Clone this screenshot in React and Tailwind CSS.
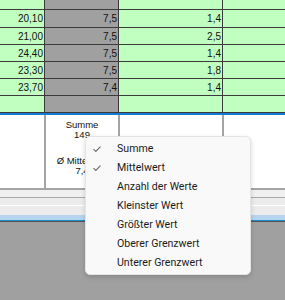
const rows = [
  { a: "20,10", b: "7,5", c: "1,4", h: "h-[18px]" },
  { a: "21,00", b: "7,5", c: "2,5", h: "h-[17px]" },
  { a: "24,40", b: "7,5", c: "1,4", h: "h-[17px]" },
  { a: "23,30", b: "7,5", c: "1,8", h: "h-[17px]" },
  { a: "23,70", b: "7,4", c: "1,4", h: "h-[17px]" },
  { a: "", b: "", c: "", h: "h-[17px]" },
];

const menuItems = [
  { label: "Summe", checked: true },
  { label: "Mittelwert", checked: true },
  { label: "Anzahl der Werte" },
  { label: "Kleinster Wert" },
  { label: "Größter Wert" },
  { label: "Oberer Grenzwert" },
  { label: "Unterer Grenzwert" },
];

const Check = () => (
  <svg width="10" height="8" viewBox="0 0 10 8" className="block">
    <path d="M1.5 4.2 L3.8 6.4 L8.5 1.6" fill="none" stroke="#6b6b6b" strokeWidth="1.1" />
  </svg>
);

const GridRow = ({ row }) => (
  <div className={`flex ${row.h} border-b border-[#3a3a3a] text-[10px] leading-[12px] text-[#111]`}>
    <div className="w-[45px] shrink-0 border-r border-[#3a3a3a] bg-[#c0ffc0] pr-[1px] pt-[3px] text-right">{row.a}</div>
    <div className="w-[74px] shrink-0 border-r border-[#3a3a3a] bg-[#a0a0a0] pr-[1px] pt-[3px] text-right">{row.b}</div>
    <div className="w-[104px] shrink-0 border-r border-[#3a3a3a] bg-[#c0ffc0] pr-[1px] pt-[3px] text-right">{row.c}</div>
    <div className="flex-1 bg-[#c0ffc0]" />
  </div>
);

export default function App() {
  return (
    <div className="relative h-[300px] w-[285px] overflow-hidden bg-[#a0a0a0] font-['Liberation_Sans',Arial,sans-serif]">
      {/* grid body */}
      <div className="flex h-[10px] border-b border-[#3a3a3a]">
        <div className="w-[45px] shrink-0 border-r border-[#3a3a3a] bg-[#c0ffc0]" />
        <div className="w-[74px] shrink-0 border-r border-[#3a3a3a] bg-[#a0a0a0]" />
        <div className="w-[104px] shrink-0 border-r border-[#3a3a3a] bg-[#c0ffc0]" />
        <div className="flex-1 bg-[#c0ffc0]" />
      </div>
      {rows.map((r, i) => (
        <GridRow key={i} row={r} />
      ))}
      <div className="h-[2px] bg-[#1479d4]" />

      {/* footer summary */}
      <div className="flex h-[75px] border-b-2 border-[#a4a4a4] bg-white">
        <div className="w-[46px] shrink-0 border-r-2 border-[#a4a4a4]" />
        <div className="flex w-[74px] shrink-0 flex-col items-center border-r-2 border-[#a4a4a4] pt-[5px] text-[9.5px] leading-[10px] text-[#111]">
          <span>Summe</span>
          <span>149</span>
          <span className="mt-[16px]">Ø Mittelwert</span>
          <span>7,4</span>
        </div>
        <div className="w-[104px] shrink-0 border-r-2 border-[#a4a4a4]" />
        <div className="flex-1" />
      </div>

      {/* scrollbar strip */}
      <div className="h-[7px] bg-[#f0f0f0]" />
      <div className="h-[1px] bg-[#a8a8a8]" />
      <div className="h-[7px] bg-[#ececec]" />
      <div className="h-[1px] bg-white" />
      <div className="h-[9px] bg-[#ececec]" />
      <div className="h-[5px] bg-[#b6d3ef]" />
      <div className="h-[1px] bg-[#1a8fcf]" />
      <div className="h-[1px] bg-[#555]" />

      {/* context menu */}
      <div className="absolute left-[85px] top-[136px] w-[166px] rounded-[5px] border border-[#e4e4e4] bg-[#f9f9f9] py-[2px] shadow-[0_2px_5px_rgba(0,0,0,0.16)] font-['Roboto',sans-serif]">
        {menuItems.map((m) => (
          <div key={m.label} className="flex h-[19px] items-center text-[10.6px] text-[#1b1b1b]">
            <div className="flex w-[31px] shrink-0 justify-end pr-[15px]">{m.checked && <Check />}</div>
            <span>{m.label}</span>
          </div>
        ))}
      </div>
    </div>
  );
}
